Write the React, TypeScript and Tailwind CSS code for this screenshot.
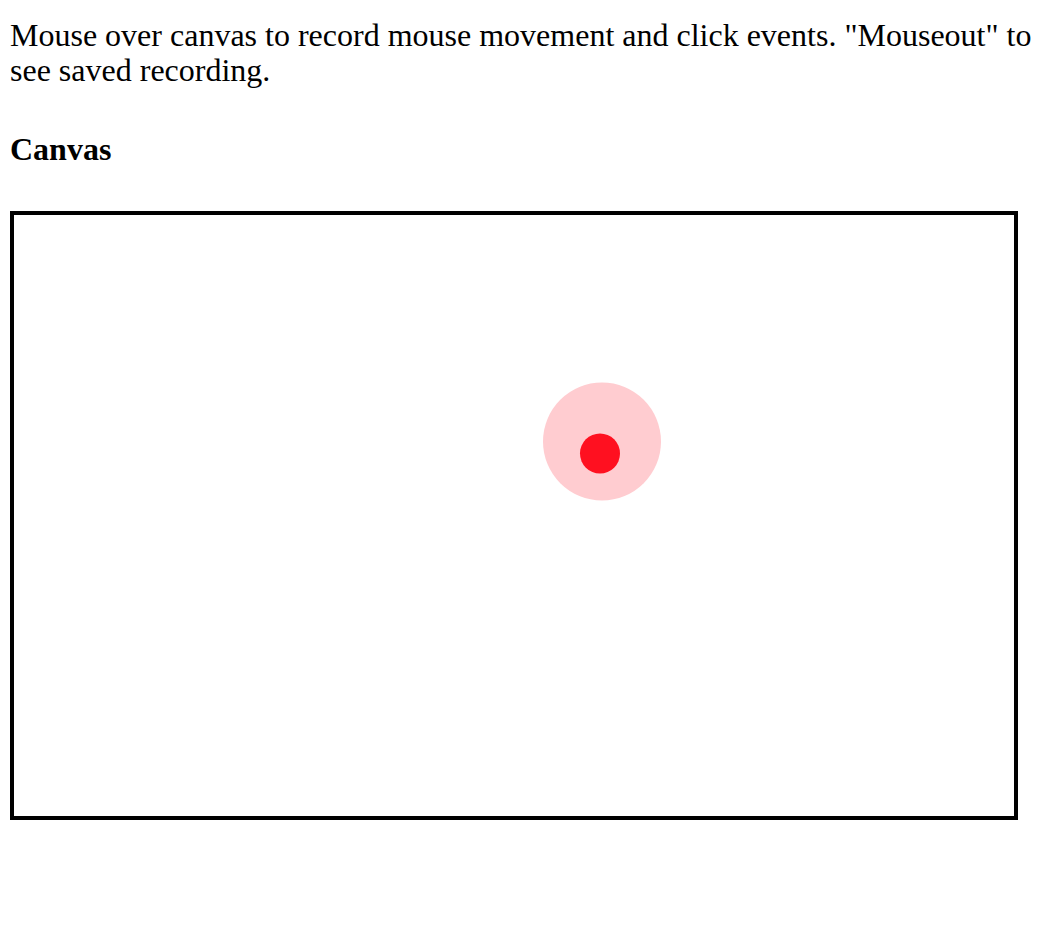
export default function App() {
  return (
    <div className="min-h-screen bg-white px-[10px] pt-[18px] text-black" style={{ fontFamily: '"Liberation Serif", "Times New Roman", serif' }}>
      <p className="text-[32px] leading-[35px]">
        Mouse over canvas to record mouse movement and click events. "Mouseout" to see saved recording.
      </p>

      <h3 className="mt-[44px] text-[32px] leading-[35px] font-bold">Canvas</h3>

      <div className="mt-[44px] w-[1008px] h-[609px] border-4 border-black">
        <svg width="1000" height="601" viewBox="0 0 1000 601">
          <circle cx="588" cy="226.5" r="59" fill="#ffccd0" />
          <circle cx="586" cy="238.5" r="20" fill="#ff1020" />
        </svg>
      </div>
    </div>
  );
}
